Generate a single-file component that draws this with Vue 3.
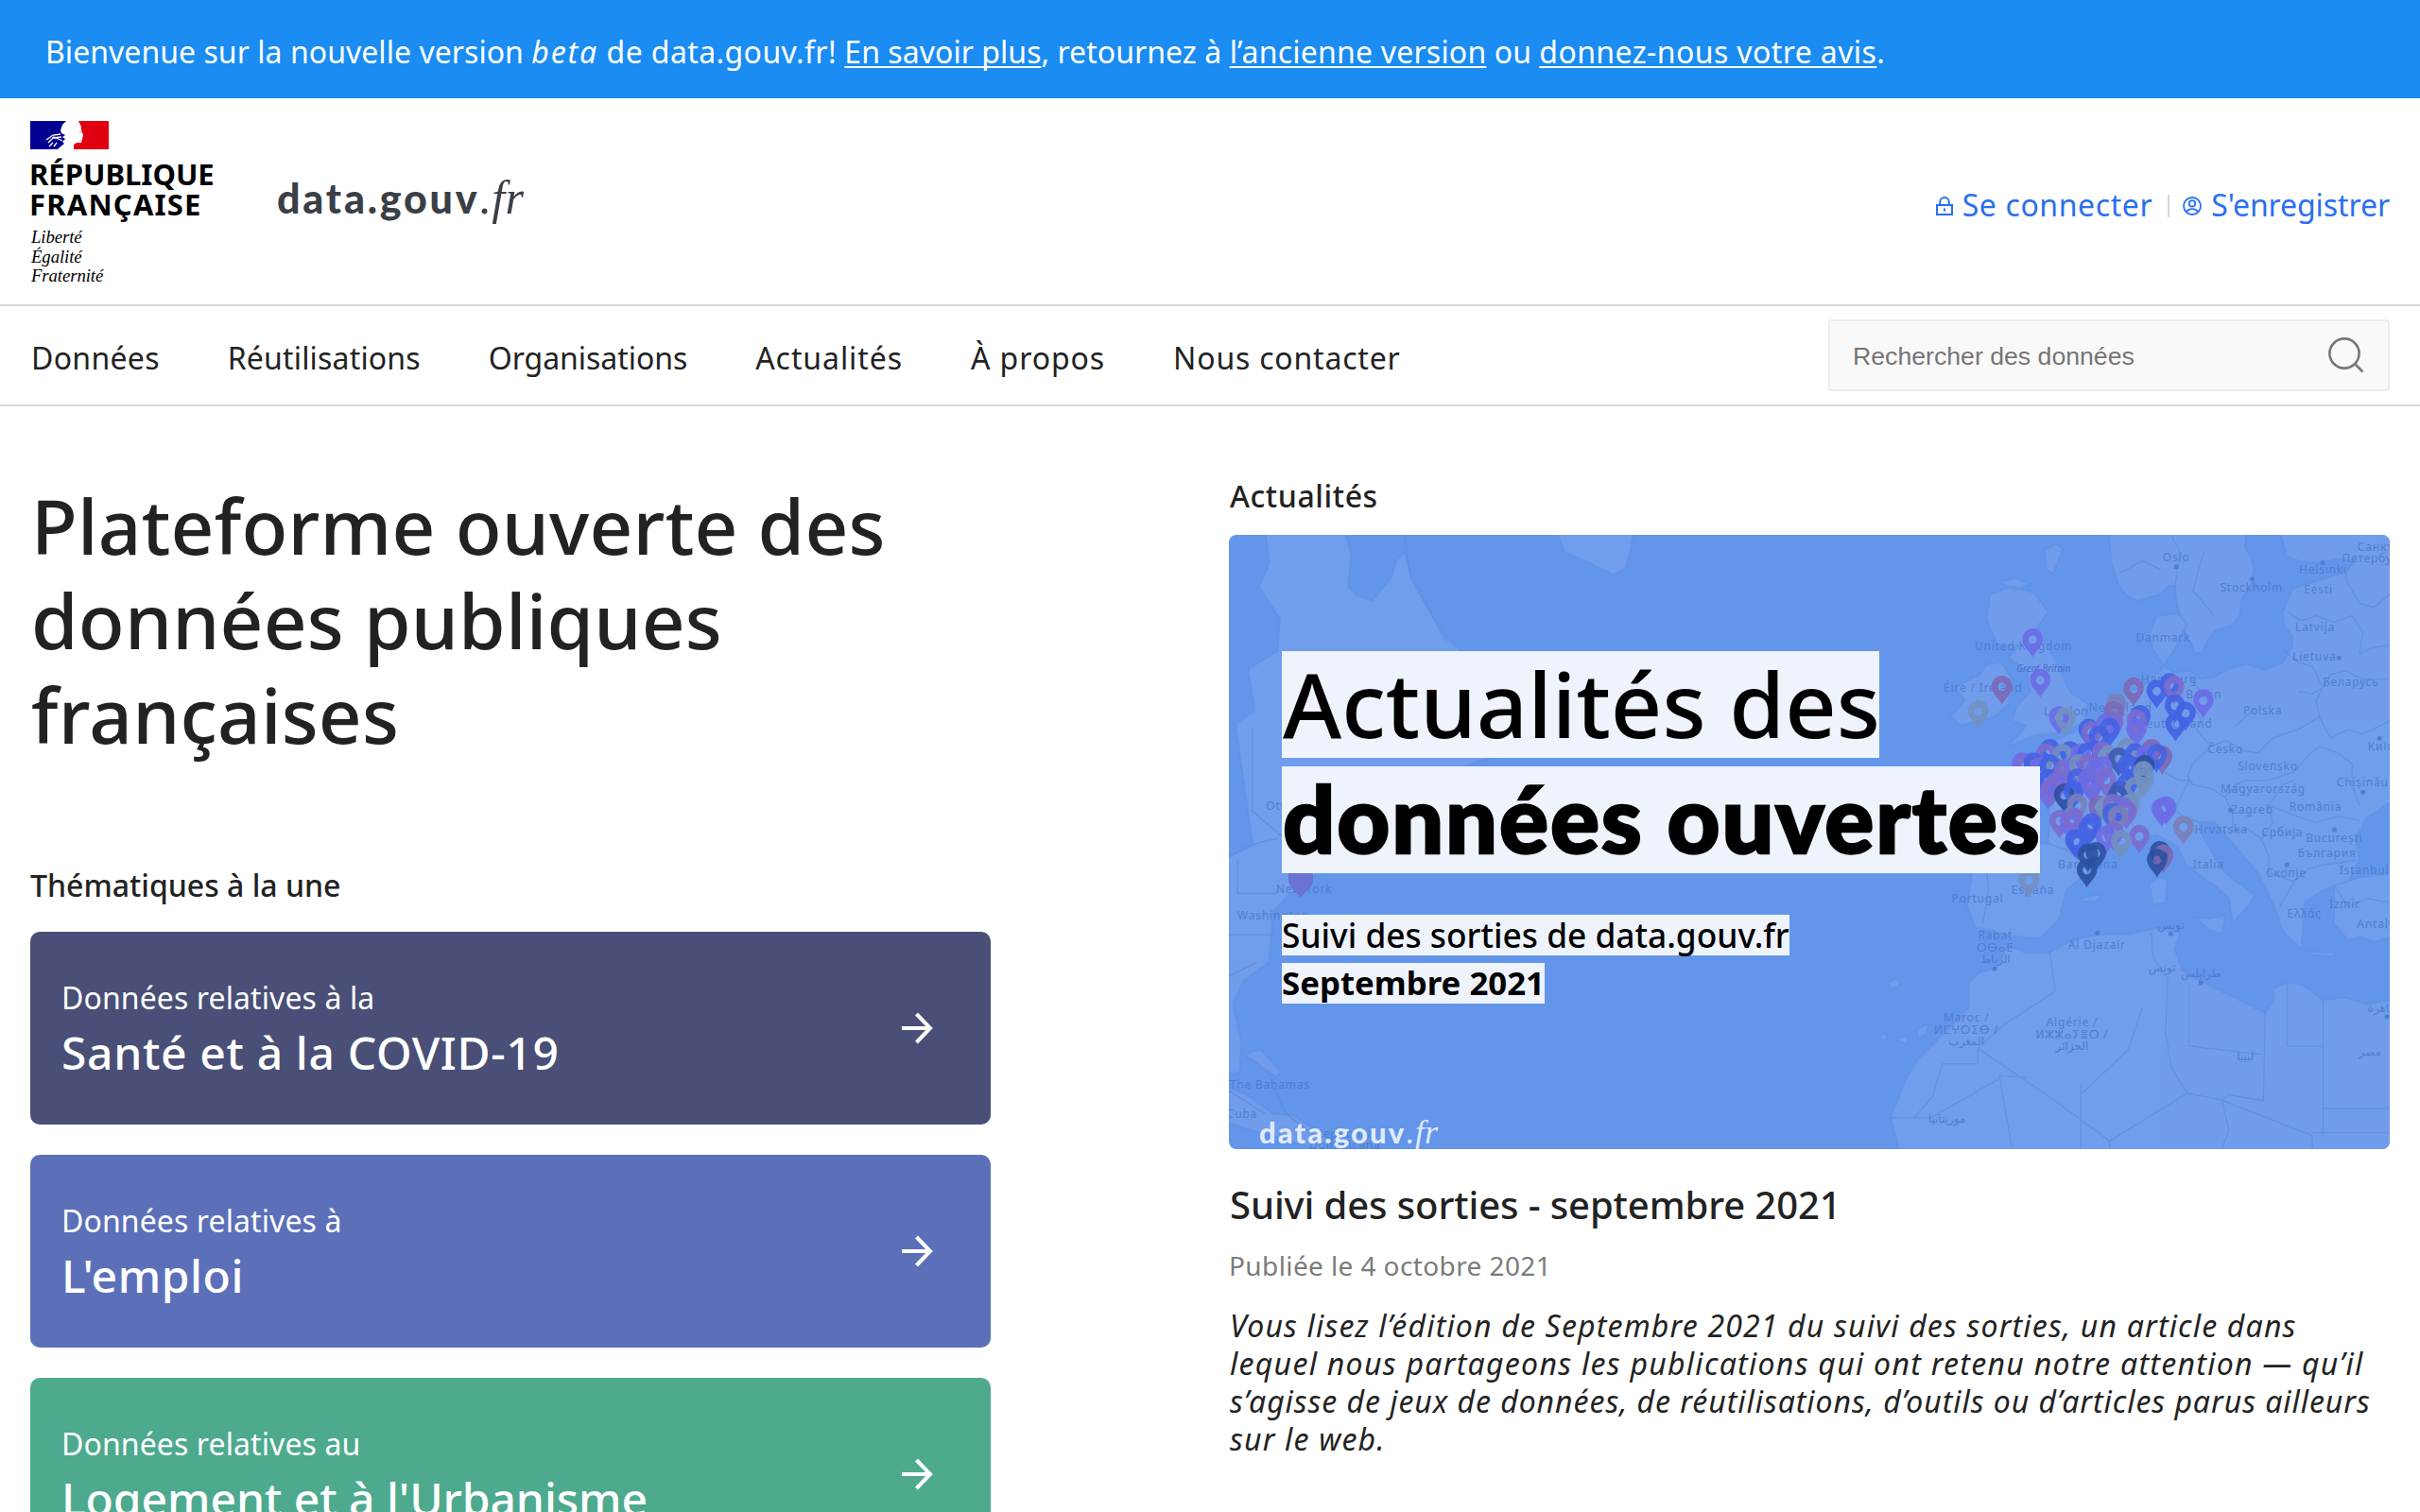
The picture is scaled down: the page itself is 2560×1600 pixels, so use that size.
<script setup>
const nav = [
  { label: 'Données', cls: 'n1' },
  { label: 'Réutilisations', cls: 'n2' },
  { label: 'Organisations', cls: 'n3' },
  { label: 'Actualités', cls: 'n4' },
  { label: 'À propos', cls: 'n4' },
  { label: 'Nous contacter', cls: 'n5' },
]

const themes = [
  { intro: 'Données relatives à la', title: 'Santé et à la COVID-19', cls: 'health' },
  { intro: 'Données relatives à', title: "L'emploi", cls: 'jobs' },
  { intro: 'Données relatives au', title: "Logement et à l'Urbanisme", cls: 'housing' },
]

// Europe pane of the map has its own coordinate grid
const ex = (x) => x / 2.613 + 660
const ey = (y) => y / 2.24 - 26
const ax = (x) => x / 2.24 - 20
const ay = (y) => y / 2.062 - 86

const labels = [
  ['Oslo', 894, 120], ['Stockholm', 1102, 193], ['Helsinki', 1300, 150], ['Eesti', 1287, 197],
  ['Санкт-', 1450, 96], ['Петербург', 1440, 124], ['Latvija', 1278, 286], ['Lietuva', 1276, 357],
  ['Danmark', 858, 311], ['United Kingdom', 472, 332], ['Great Britain', 527, 384, 'dark'],
  ['Éire / Ireland', 360, 430], ['London', 590, 487], ['Hamburg', 874, 410], ['Nederland', 740, 476],
  ['Deutschland', 890, 515], ['Беларусь', 1377, 416], ['Berlin', 970, 445], ['Polska', 1133, 483],
  ['Česko', 1030, 575], ['Київ', 1460, 569], ['Slovensko', 1147, 615], ['Chișinău', 1409, 654],
  ['Magyarország', 1134, 670], ['Zagreb', 1104, 718], ['România', 1279, 712], ['Hrvatska', 1018, 767],
  ['Србија', 1187, 773], ['București', 1331, 787], ['България', 1311, 823], ['Italia', 983, 848],
  ['Скопје', 1198, 869], ['İstanbul', 1414, 862], ['İzmir', 1360, 944], ['Ελλάς', 1248, 966],
  ['Antalya', 1456, 991], ['Barcelona', 650, 850], ['España', 498, 909], ['Portugal', 345, 929],
  ['Rabat', 394, 1016], ['ⵔⴱⴰⵟ', 394, 1045], ['الرباط', 394, 1073], ['Al Djazaïr', 675, 1039],
  ['تونس', 879, 992], ['تونس', 855, 1093], ['طرابلس', 962, 1107], ['Maroc /', 314, 1211],
  ['ⵍⵎⵖⵔⵉⴱ /', 314, 1240], ['المغرب', 314, 1268], ['Algérie /', 606, 1223],
  ['ⵍⵣⵣⴰⵢⴻⵔ /', 606, 1252], ['الجزائر', 606, 1280], ['ليبيا', 1085, 1304], ['مصر', 1430, 1293],
  ['القاهرة', 1470, 1190], ['موريتانيا', 260, 1451],
].map(([text, x, y, cls]) => ({ text, x: ex(x), y: ey(y), cls }))
labels.push(
  { text: 'Ottawa', x: ax(184), y: ay(778) },
  { text: 'New York', x: ax(223), y: ay(958) },
  { text: 'Washington', x: ax(150), y: ay(1017) },
  { text: 'The Bahamas', x: ax(142), y: ay(1386) },
  { text: 'Cuba', x: ax(76), y: ay(1450) },
  { text: 'República', x: ax(320), y: ay(1492) },
  { text: 'Dominicana', x: ax(320), y: ay(1517) },
)

const dots = [
  [894, 134], [1104, 163], [1299, 124], [1456, 541], [1410, 668], [1044, 710], [1331, 757],
  [1200, 840], [676, 1002], [879, 1004], [392, 1087], [962, 1120], [1476, 1200], [1344, 350],
].map(([x, y]) => [ex(x), ey(y)])

const tint = { v: '#6b6be6', b: '#4263e3', n: '#3c5bb4', g: '#7290c0', p: '#7a6bcd', r: '#7c68b4', d: '#2c50a0', m: '#7880b9' }
const pins = [
  ['v', 497, 308], ['v', 518, 404], ['r', 412, 420], ['g', 347, 478], ['r', 776, 424], ['b', 840, 430],
  ['v', 570, 492], ['g', 588, 494], ['m', 728, 462], ['r', 722, 480], ['b', 876, 414], ['p', 888, 420],
  ['b', 890, 464], ['v', 969, 452], ['b', 920, 482], ['b', 892, 508], ['b', 795, 490], ['p', 785, 500],
  ['p', 720, 505], ['v', 700, 510], ['b', 652, 522], ['p', 660, 528], ['b', 710, 520], ['v', 784, 520],
  ['b', 680, 538], ['g', 758, 568], ['r', 826, 570], ['r', 855, 586], ['b', 545, 570], ['p', 535, 580],
  ['b', 600, 575], ['g', 580, 582], ['v', 630, 580], ['b', 650, 578], ['p', 690, 575], ['g', 705, 586],
  ['n', 735, 590], ['b', 780, 580], ['v', 810, 584], ['b', 840, 582], ['v', 468, 602], ['p', 478, 606],
  ['b', 500, 602], ['v', 520, 612], ['g', 560, 612], ['b', 545, 606], ['p', 585, 618], ['v', 610, 612],
  ['g', 626, 606], ['p', 650, 606], ['v', 670, 620], ['v', 690, 612], ['b', 760, 606], ['b', 775, 612],
  ['d', 806, 608], ['g', 803, 622], ['g', 805, 640], ['b', 540, 642], ['v', 560, 650], ['p', 575, 640],
  ['b', 620, 640], ['v', 650, 640], ['p', 664, 650], ['v', 540, 670], ['p', 550, 662], ['d', 584, 676],
  ['b', 610, 668], ['v', 660, 655], ['p', 700, 640], ['n', 740, 668], ['b', 757, 652], ['g', 780, 660],
  ['n', 732, 680], ['m', 620, 700], ['r', 680, 704], ['g', 700, 706], ['p', 720, 700], ['g', 765, 700],
  ['v', 750, 710], ['p', 757, 716], ['b', 718, 722], ['m', 733, 728], ['p', 572, 738], ['v', 600, 742],
  ['p', 610, 732], ['b', 660, 746], ['b', 652, 756], ['v', 866, 706], ['v', 854, 710], ['m', 914, 752],
  ['p', 720, 766], ['v', 700, 776], ['b', 615, 784], ['b', 622, 788], ['p', 792, 774], ['g', 742, 786],
  ['d', 672, 814], ['d', 650, 818], ['d', 647, 854], ['d', 849, 812], ['r', 858, 820], ['d', 841, 830],
  ['g', 487, 878],
].map(([c, x, y]) => ({ fill: tint[c], x: ex(x), y: ey(y) }))
</script>

<template>
  <div class="page">
    <div class="banner">
      <p>Bienvenue sur la nouvelle version <em>beta</em> <span class="s1">de data.gouv.fr!</span> <a>En savoir plus</a>, retournez à <a class="s2">l’ancienne version</a> ou <a class="s1">donnez-nous votre avis</a>.</p>
    </div>

    <header class="header">
      <div class="brand">
        <svg class="flag" viewBox="0 0 83 30" width="83" height="30">
          <path fill="#000091" d="M0 0H38L34 4L32 10L33 13L37 15L34 17L37 19L34 22L36 24L31 28L29 30H0Z" />
          <path fill="#e1000f" d="M51 0H83V30H46V25L49 23H54L55 19L56 15L54 10V6Z" />
          <path fill="none" stroke="#fff" stroke-width="1.300" d="M17 20L24 15L32 14M19 23L25 17L34 21M23 18L33 17M20 27L24 23M25 27L28 23" />
          <circle cx="53" cy="12" r=".7" fill="#777" />
        </svg>
        <div class="state"><div>RÉPUBLIQUE</div><div class="fr">FRANÇAISE</div></div>
        <div class="motto"><div>Liberté</div><div>Égalité</div><div>Fraternité</div></div>
      </div>
      <div class="logo">data.gouv<i>.fr</i></div>
      <div class="account">
        <a class="login">
          <svg width="18" height="20" viewBox="0 0 18 20" fill="none" stroke="currentColor" stroke-width="2"><path d="M1 9H17V19H1ZM4.2 9V5.8A4.8 4.8 0 0 1 13.800 5.8V9M9 12.500V15.500" /></svg>
          <span>Se connecter</span>
        </a>
        <a class="signup">
          <svg width="20" height="20" viewBox="0 0 20 20" fill="none" stroke="currentColor" stroke-width="1.8"><circle cx="10" cy="10" r="9" /><circle cx="10" cy="7.400" r="3.200" /><path d="M4 16.200C6 12.200 14 12.200 16 16.200" /></svg>
          <span>S'enregistrer</span>
        </a>
      </div>
    </header>

    <nav class="nav">
      <div class="links"><a v-for="n in nav" :key="n.label" :class="n.cls">{{ n.label }}</a></div>
      <div class="search">
        <span>Rechercher des données</span>
        <svg width="42" height="42" viewBox="0 0 42 42" fill="none" stroke="#777" stroke-width="2.600"><circle cx="19" cy="19" r="15.600" /><path d="M30 30L38.500 38.500" /></svg>
      </div>
    </nav>

    <main class="main">
      <section class="left">
        <h1>Plateforme ouverte des<br />données publiques<br />françaises</h1>
        <h2 class="label">Thématiques à la une</h2>
        <div class="cards">
          <a v-for="t in themes" :key="t.title" class="card" :class="t.cls">
            <div><div class="intro">{{ t.intro }}</div><div class="title">{{ t.title }}</div></div>
            <svg width="34" height="34" viewBox="0 0 34 34" fill="none" stroke="#fff" stroke-width="4"><path d="M1 17H31M16.500 2L31 17L16.500 32" /></svg>
          </a>
        </div>
      </section>

      <section class="right">
        <h2 class="label news">Actualités</h2>
        <div class="cover">
          <svg class="map" viewBox="0 0 1228 650" width="1228" height="650">
            <g transform="translate(660 -26) scale(.3827 .4464)" class="land">
              <path d="M708 50L715 120L735 180L762 205L790 215L825 205L850 200L875 178L890 180L896 220L905 250L915 285L940 320L945 340L965 338L980 310L1000 285L1045 275L1070 250L1075 210L1100 180L1110 140L1100 110L1085 90L1085 50Z" />
              <path d="M1180 50L1200 110L1240 122L1290 125L1340 115L1390 120L1350 150L1280 168L1215 185L1190 240L1190 270L1215 300L1215 320L1190 360L1140 378L1090 365L1040 375L1000 395L960 400L930 380L890 385L860 370L830 330L820 290L840 250L900 245L925 270L905 300L890 330L850 380L800 420L760 430L740 470L680 500L640 510L600 530L560 545L540 560L480 580L440 590L490 630L530 660L545 720L540 790L440 785L340 780L310 800L330 860L315 940L340 990L440 1010L520 1015L570 970L590 900L680 840L700 800L770 790L840 770L900 800L920 840L1000 890L1040 920L1050 980L1100 930L1110 910L1060 880L1020 850L1000 820L960 760L960 740L1000 740L1060 800L1120 860L1160 930L1190 1000L1240 1040L1245 980L1250 930L1300 900L1370 880L1400 830L1390 780L1420 730L1490 690L1490 50Z" />
              <path d="M1330 890L1400 870L1490 860L1490 1010L1440 1025L1400 1010L1370 1020L1330 980Z" />
              <path d="M820 885L845 870L870 875L865 930L830 935ZM945 965L985 968L1030 960L1020 1005L985 995ZM1260 1045L1335 1050L1328 1058L1270 1054ZM620 925L650 915L690 910L670 930Z" />
              <path d="M380 200L440 180L500 195L540 240L500 290L540 320L580 390L600 430L650 460L640 500L590 525L500 535L430 560L480 510L440 500L450 470L490 430L480 380L430 350L460 320L400 320L370 260ZM530 95L560 80L580 90L555 150L535 140ZM405 170L450 160L490 175L450 190Z" />
              <path d="M350 390L370 365L410 360L440 400L430 460L390 490L300 510L270 490L310 450L280 420Z" />
              <path d="M430 1030L480 1050L540 1050L600 1020L680 1005L760 1005L840 990L905 1000L890 1040L910 1090L960 1115L1020 1140L1090 1170L1140 1192L1165 1160L1160 1135L1200 1118L1245 1125L1300 1160L1360 1155L1420 1170L1490 1160L1490 1520L130 1520L105 1440L145 1350L180 1300L240 1250L320 1180L320 1120L350 1095L395 1085Z" />
              <path d="M95 1120L120 1110L130 1125L110 1135ZM70 1245L95 1240L90 1260ZM120 1255L150 1245L150 1265ZM180 1230L210 1215L200 1245L180 1250Z" />
            </g>
            <g transform="translate(660 -26) scale(.3827 .4464)" class="border">
              <path d="M105 1440H215M170 1440L220 1390L248 1312H345V1275L560 1400L710 1495L925 1382L1020 1398L1270 1482M405 1340L440 1513M405 1340L480 1345M345 1275L420 1218L560 1140L545 1050M825 1000L830 1060L870 1110L865 1240L880 1320L925 1382M1300 1160V1480M1300 1418H1484M1140 1190L1135 1400L1040 1385L1020 1398L1040 1470L1020 1513M1270 1482V1513M1270 1475H1484M630 1360V1513M710 1495V1513M630 1385L760 1280L800 1180M215 1440L400 1350M930 1120V1270L1130 1290M1200 1120V1270H1300" />
              <path d="M890 180L905 100L880 58M970 100L940 190L1000 250M735 150L800 120L850 140M1200 240L1240 262L1280 250L1330 265L1380 250L1410 290L1400 340L1440 325L1484 320M1190 330L1230 360L1270 370L1300 420L1280 450L1290 490L1320 540L1370 520L1410 530L1484 500M930 390L960 430L945 470L965 500L950 520L990 560L1030 545L1080 570L1120 575L1160 540L1230 520L1290 490M990 560L940 600L925 630L940 650L990 660L1030 680L1060 650L1090 640L1150 640L1220 620L1260 580L1290 560M1030 680L1050 720L1050 760L1090 755L1130 780L1160 740L1150 700L1190 650L1220 640M1130 780L1150 820L1150 860L1220 880L1260 850L1300 840L1390 830M1220 880L1180 940M1290 560L1340 575L1380 600L1380 650L1400 700M860 620L900 640L930 640L890 710L920 730L960 740M740 480L780 500L780 540L820 580L860 620M540 790L590 805L630 830L700 800M380 800L370 850L375 900L360 980M1380 120L1360 160L1400 220L1440 230L1484 200M1230 430L1270 435L1300 420L1320 390L1360 380L1410 400L1484 400M1150 700L1210 720L1280 740L1340 725L1400 735M1060 510L1110 470M1330 890L1370 940L1420 920L1484 930" />
            </g>
            <g transform="translate(-20 -86) scale(.4464 .485)" class="land">
              <path d="M130 170L320 170L335 220L328 290L350 310L385 320L430 270L440 235L460 215L480 270L520 340L560 400L620 450L700 500L750 600L740 650L640 670L560 700L400 800L330 860L250 920L190 960L150 1000L140 1110L80 1150L55 1200L75 1290L70 1350L40 1355L40 880L100 850L60 590L105 560L90 470L160 430L165 360L115 290L140 240Z" />
              <path d="M820 170L1005 170L995 220L985 250L955 265L900 240L840 215ZM40 1380L90 1400L150 1440L200 1445L290 1500L260 1520L40 1460ZM80 1310L120 1300L170 1350L155 1360Z" />
            </g>
            <g transform="translate(-20 -86) scale(.4464 .485)" class="border"><path d="M460 178L475 270L560 410M100 600V780L190 850M45 1050H150M65 890V960H160M45 1140L110 1110M45 880L110 850L160 840M150 1380L180 1440L250 1490M45 1390L130 1440" /></g>
            <g class="names">
              <circle v-for="(d, i) in dots" :key="i" :cx="d[0]" :cy="d[1]" r="2.500" />
              <text v-for="(l, i) in labels" :key="'l' + i" :x="l.x" :y="l.y" :class="l.cls">{{ l.text }}</text>
            </g>
            <g v-for="(p, i) in pins" :key="'p' + i" :transform="`translate(${p.x} ${p.y})`">
              <path :fill="p.fill" fill-rule="evenodd" fill-opacity=".9" d="M0 18C-2 13-10.800 6.500-10.800-1A10.800 11.500 0 0 1 10.800-1C10.800 6.500 2 13 0 18ZM0-5A4.400 4.600 0 1 0 0 4.200A4.400 4.600 0 1 0 0-5Z" />
            </g>
            <path transform="translate(76 367)" fill="#6c72d2" d="M0 17C-2 12-13 7-13-2V-10H13V-2C13 7 2 12 0 17Z" />
          </svg>
          <div class="caption">
            <div class="big"><span>Actualités des</span></div>
            <div class="big heavy"><span>données ouvertes</span></div>
            <div class="small first">Suivi des sorties de data.gouv.fr</div>
            <div class="small bold">Septembre 2021</div>
          </div>
          <div class="logo mini">data.gouv<i>.fr</i></div>
        </div>
        <h3>Suivi des sorties - septembre 2021</h3>
        <p class="date">Publiée le 4 octobre 2021</p>
        <p class="excerpt">
          <span class="e1">Vous lisez l’édition de Septembre 2021 du suivi des sorties, un article dans</span>
          <span class="e2">lequel nous partageons les publications qui ont retenu notre attention — qu’il</span>
          <span class="e3">s’agisse de jeux de données, de réutilisations, d’outils ou d’articles parus ailleurs</span>
          <span class="e1">sur le web.</span>
        </p>
      </section>
    </main>
  </div>
</template>

<style>
html, body { margin: 0; overflow: hidden; background: #fff; }
</style>

<style scoped>
.page { width: 2560px; height: 1600px; overflow: hidden; font-family: 'Noto Sans', 'Open Sans', sans-serif; font-size: 32px; color: #222; box-sizing: border-box; }
.page * { box-sizing: border-box; }
h1, h2, h3, p { margin: 0; font-weight: 500; }
.banner { height: 104px; background: #1a8cf2; color: #fff; padding: 5px 48px 0; display: flex; align-items: center; }
.banner p { font-weight: 400; line-height: 48px; white-space: nowrap; letter-spacing: .04px; }
.banner em { letter-spacing: 1.900px; }
.banner a { text-decoration: underline; text-decoration-thickness: 2px; text-underline-offset: 3px; text-decoration-skip-ink: none; }
.banner .s1 { letter-spacing: .4px; }
.banner .s2 { letter-spacing: .2px; }

.header { height: 218px; padding: 24px 32px 0; display: flex; }
.brand { width: 261px; color: #000; }
.flag { display: block; }
.state { font-size: 31px; font-weight: 700; line-height: 32px; margin: 10px 0 0 -1px; white-space: nowrap; }
.fr { letter-spacing: 1.200px; }
.motto { margin-top: 9px; padding-left: 1px; font: italic 18.800px/20.700px 'Liberation Serif', serif; letter-spacing: -.1px; }
.logo { font-family: Lato, sans-serif; font-weight: 900; font-size: 43px; line-height: 52px; letter-spacing: 2.800px; color: #3a3f47; white-space: nowrap; margin-top: 56px; }
.logo i { font-family: 'Liberation Serif', serif; font-weight: 400; font-size: 50px; line-height: 40px; letter-spacing: .3px; }
.account { margin-left: auto; margin-top: 65px; height: 48px; display: flex; align-items: center; color: #2a6ff0; line-height: 48px; }
.account a { display: flex; align-items: center; gap: 10px; }
.account svg { display: block; margin-top: 2px; }
.login { letter-spacing: .6px; padding-right: 16px; }
.signup { padding-left: 16px; background: linear-gradient(#d8d8d8, #d8d8d8) 0 55% / 2px 24px no-repeat; letter-spacing: -.1px; }

.nav { height: 108px; border-top: 2px solid #d8d8d8; border-bottom: 2px solid #d8d8d8; padding: 0 32px; display: flex; align-items: center; justify-content: space-between; }
.links { display: flex; gap: 72px; padding: 4px 0 0 1px; white-space: nowrap; }
.n1 { letter-spacing: .3px; }
.n2 { letter-spacing: .17px; }
.n3 { letter-spacing: -.05px; }
.n4 { letter-spacing: .92px; }
.n5 { letter-spacing: .8px; }
.search { width: 594px; height: 76px; background: #f9f9f9; border: 2px solid #ececea; border-radius: 4px; display: flex; align-items: center; justify-content: space-between; padding: 0 23px 0 24px; font: 26.670px 'Liberation Sans', Arial, sans-serif; color: #757575; }
.search span { padding-top: 2px; }

.main { display: flex; justify-content: space-between; padding: 0 32px; }
.left { width: 1016px; padding-top: 76px; }
.left h1 { font-size: 80px; line-height: 100px; letter-spacing: .2px; padding-left: 1px; }
.label { font-size: 32px; line-height: 48px; }
.left .label { margin-top: 107px; }
.cards { display: flex; flex-direction: column; gap: 32px; margin-top: 25px; }
.card { height: 204px; border-radius: 10px; color: #fff; padding: 0 61px 0 33px; display: flex; align-items: center; justify-content: space-between; }
.health { background: #494f76; }
.jobs { background: #5c70b9; }
.housing { background: #4daa8e; }
.intro { line-height: 48px; letter-spacing: .1px; padding-top: 1px; }
.title { font-size: 48px; font-weight: 500; line-height: 64px; letter-spacing: .3px; padding-top: 2px; }
.health .title { letter-spacing: .65px; }
.jobs .title { letter-spacing: .6px; }
.housing .title { letter-spacing: -.05px; }

.right { width: 1228px; padding-top: 71px; }
.news { letter-spacing: .6px; padding-left: 1px; }
.cover { position: relative; width: 1228px; height: 650px; margin-top: 17px; border-radius: 8px; overflow: hidden; background: #6396ea; }
.map { position: absolute; inset: 0; }
.land { fill: #709dec; stroke: #6092e5; stroke-width: 5; stroke-opacity: .7; }
.border { fill: none; stroke: #5f8bdc; stroke-width: 3; stroke-opacity: .75; }
.names { fill: #4c79ca; font-family: 'Noto Sans', 'DejaVu Sans', sans-serif; font-size: 12px; letter-spacing: .8px; text-anchor: middle; opacity: .85; }
.names .dark { fill: #3f69c0; font-style: italic; font-size: 10px; letter-spacing: 0; }
.caption { position: relative; padding: 123px 0 0 56px; display: flex; flex-direction: column; align-items: flex-start; color: #000; white-space: nowrap; }
.caption div { background: #eff3fc; }
.big { font-size: 95px; font-weight: 500; line-height: 110px; height: 113px; width: 632px; margin-bottom: 9px; padding-left: 1px; }
.caption .heavy { width: 802px; font-family: Lato, sans-serif; font-weight: 900; font-size: 97px; letter-spacing: 1.900px; line-height: 109px; -webkit-text-stroke: 2.500px #000; }
.small { font-size: 35.300px; font-weight: 500; line-height: 42px; height: 43px; margin-bottom: 8px; }
.first { margin-top: 35px; }
.small.bold { font-weight: 700; font-size: 34.800px; }
.mini { position: absolute; left: 32px; bottom: -1px; margin: 0; font-size: 31px; line-height: 38px; letter-spacing: 2.100px; color: #dfeafb; }
.mini i { font-size: 36px; line-height: 30px; }
.right h3 { font-size: 40px; line-height: 56px; margin-top: 31px; letter-spacing: -.1px; padding-left: 1px; }
.date { font-size: 28px; line-height: 40px; color: #7b7b7b; font-weight: 400; letter-spacing: .4px; margin-top: 16px; }
.excerpt { font-style: italic; font-weight: 400; line-height: 40px; margin-top: 24px; padding-left: 1px; white-space: nowrap; }
.excerpt span { display: block; }
.e1 { letter-spacing: 1.170px; }
.e2 { letter-spacing: 1.280px; }
.e3 { letter-spacing: .950px; }
</style>
